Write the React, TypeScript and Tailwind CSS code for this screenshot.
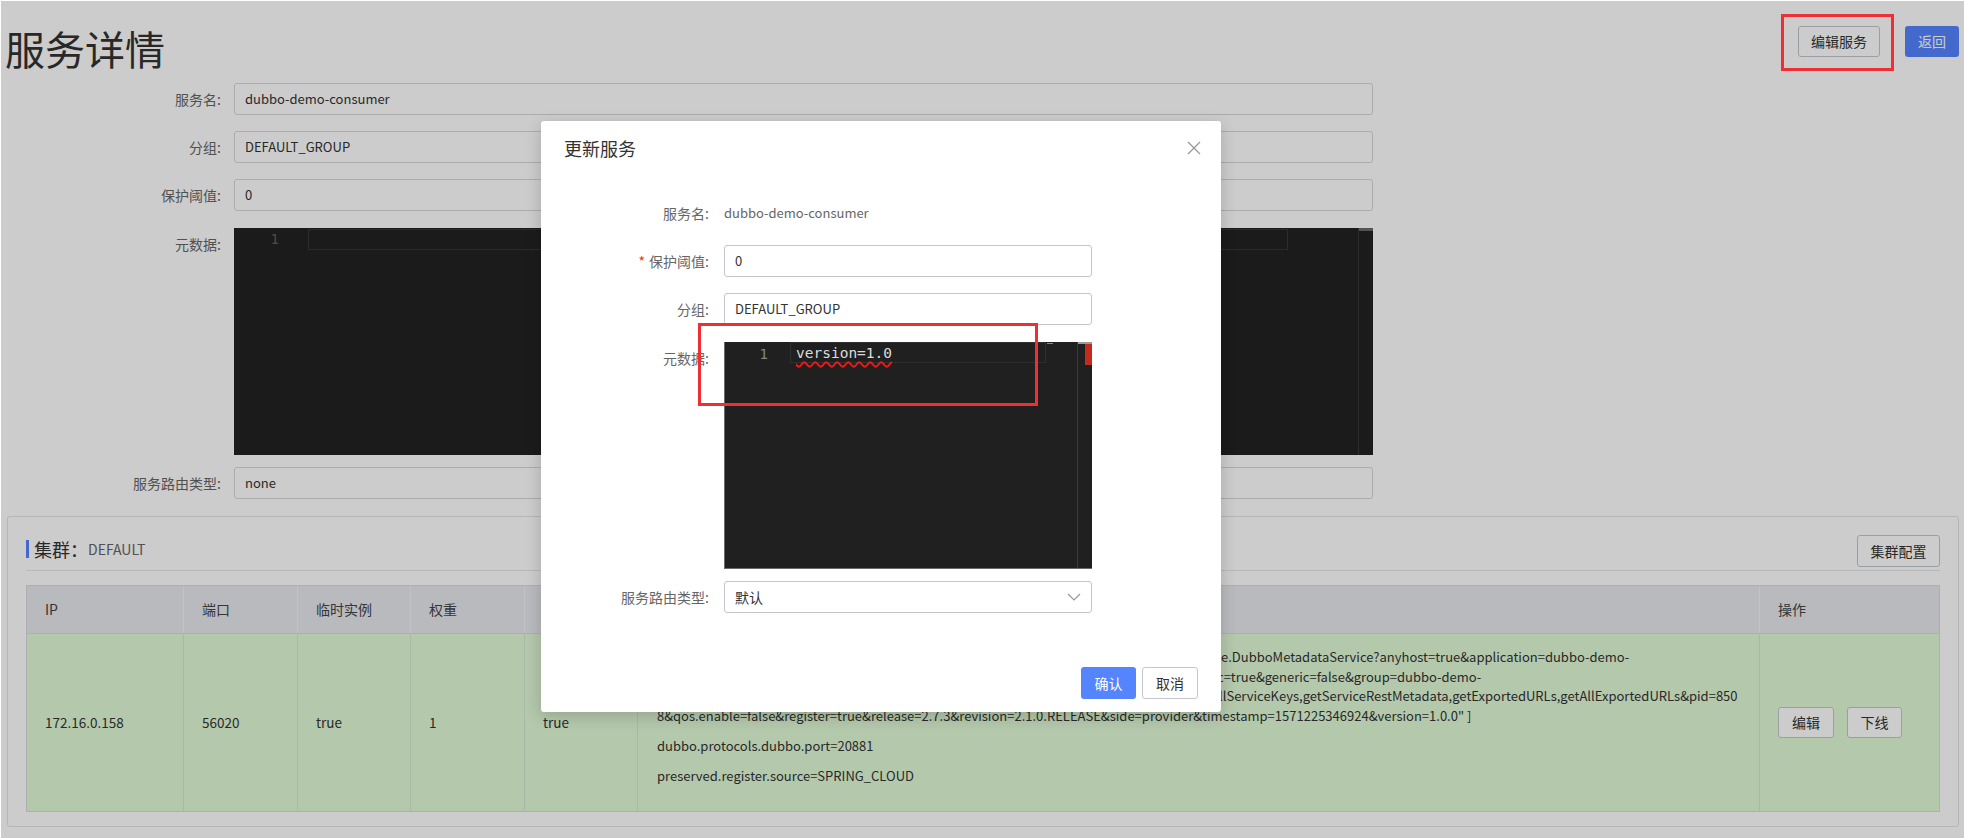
import React from "react";

const headers = ["IP", "端口", "临时实例", "权重", "健康状态", "元数据", "操作"];

function PageRow({ label, children, className }: { label: string; children: React.ReactNode; className?: string }) {
  return (
    <div className={"flex items-start " + (className ?? "")}>
      <div className="h-[32px] w-[216px] text-right leading-[32px] text-[#666]">{label}</div>
      <div className="ml-[13px]">{children}</div>
    </div>
  );
}

function PageInput({ children }: { children: React.ReactNode }) {
  return (
    <div className="flex h-[32px] w-[1139px] items-center rounded-[3px] border border-[#d5d7de] bg-white px-[10px] text-[13px] text-[#333]">
      {children}
    </div>
  );
}

function ModalRow({ label, children, required, className }: { label: string; children: React.ReactNode; required?: boolean; className?: string }) {
  return (
    <div className={"flex items-start " + (className ?? "")}>
      <div className="flex h-[32px] w-[168px] items-center justify-end text-[#666]">
        {required && <span className="mr-[4px] text-[#ff3000]">*</span>}
        {label}
      </div>
      <div className="ml-[15px]">{children}</div>
    </div>
  );
}

export default function App() {
  return (
    <div className="relative h-[838px] w-[1964px] overflow-hidden bg-white font-['Noto_Sans_CJK_SC','Noto_Sans',sans-serif] text-[14px] text-[#333]">
      {/* page */}
      <div className="px-[5px]">
        <div className="flex items-start justify-between pt-[24px]">
          <h1 className="text-[40px] font-normal leading-[48px] text-[#333]">服务详情</h1>
          <div className="mt-[2px] flex items-center gap-[25px]">
            <button className="h-[31px] w-[82px] rounded-[3px] border border-[#c4c6cf] bg-white text-[14px] text-[#333]">编辑服务</button>
            <button className="h-[31px] w-[54px] rounded-[3px] bg-[#5584ff] text-[14px] text-white">返回</button>
          </div>
        </div>

        <div className="mt-[11px] flex flex-col">
          <PageRow label="服务名:">
            <PageInput>dubbo-demo-consumer</PageInput>
          </PageRow>
          <PageRow label="分组:" className="mt-[16px]">
            <PageInput>DEFAULT_GROUP</PageInput>
          </PageRow>
          <PageRow label="保护阈值:" className="mt-[16px]">
            <PageInput>0</PageInput>
          </PageRow>
          <PageRow label="元数据:" className="mt-[17px]">
            <div className="flex h-[227px] w-[1139px] bg-[#222]">
              <div className="w-[74px] pr-[29px] pt-[1px] text-right font-['DejaVu_Sans_Mono',monospace] text-[14px] leading-[20px] text-[#5e5e5e]">1</div>
              <div className="flex-1 pt-[1px]">
                <div className="h-[21px] border border-[#363636]" />
              </div>
              <div className="w-[70px]" />
              <div className="w-[15px] border-l border-[#3a3a3a]">
                <div className="h-[3px] bg-[#6a6a6a]" />
              </div>
            </div>
          </PageRow>
          <PageRow label="服务路由类型:" className="mt-[12px]">
            <PageInput>none</PageInput>
          </PageRow>
        </div>

        {/* cluster panel */}
        <div className="ml-[2px] mt-[17px] rounded-[3px] border border-[#e4e4e4] px-[18px] pb-[14px] pt-[18px]">
          <div className="flex h-[36px] items-start justify-between border-b border-[#e6e6e6]">
            <div className="flex h-[28px] items-center">
              <div className="h-[18px] w-[3px] bg-[#5584ff]" />
              <span className="ml-[5px] text-[18px] text-[#333]">集群：</span>
              <span className="text-[14px] text-[#666]">DEFAULT</span>
            </div>
            <button className="h-[32px] w-[83px] rounded-[3px] border border-[#c4c6cf] bg-white text-[14px] text-[#333]">集群配置</button>
          </div>

          <div className="mt-[14px] border border-[#d9dbe0]">
            <div className="grid h-[48px] grid-cols-[156px_114px_113px_114px_113px_1122px_181px] border-b border-[#d9dbe0] bg-[#e7e9ee]">
              {headers.map((h, i) => (
                <div
                  key={h}
                  className={"flex items-center pl-[18px] text-[#444] " + (i > 0 ? "border-l border-[#f3f4f6]" : "")}
                >
                  {h}
                </div>
              ))}
            </div>
            <div className="grid h-[177px] grid-cols-[156px_114px_113px_114px_113px_1122px_181px] bg-[#e2fbd8] text-[13.5px]">
              <div className="flex items-center pl-[18px]">172.16.0.158</div>
              <div className="flex items-center border-l border-[#d6e6cf] pl-[18px]">56020</div>
              <div className="flex items-center border-l border-[#d6e6cf] pl-[18px]">true</div>
              <div className="flex items-center border-l border-[#d6e6cf] pl-[18px]">1</div>
              <div className="flex items-center border-l border-[#d6e6cf] pl-[18px]">true</div>
              <div className="flex flex-col border-l border-[#d6e6cf] pl-[19px] pt-[13px] text-[13px] leading-[19.6px] text-[#333]">
                <div className="whitespace-nowrap">
                  <span className="inline-block w-[564px] overflow-hidden align-top">dubbo.metadata-service.urls=[ "dubbo://172.16.0.158:20881/com.alibaba.cloud.dubbo.servic</span>e.DubboMetadataService?anyhost=true&amp;application=dubbo-demo-
                </div>
                <div className="whitespace-nowrap">
                  <span className="inline-block w-[560px] overflow-hidden align-top">consumer&amp;bind.ip=172.16.0.158&amp;bind.port=20881&amp;deprecated=false&amp;dubbo=2.0.2&amp;dynami</span>c=true&amp;generic=false&amp;group=dubbo-demo-
                </div>
                <div className="whitespace-nowrap">
                  <span className="inline-block w-[562px] overflow-hidden align-top">consumer&amp;interface=com.alibaba.cloud.dubbo.service.DubboMetadataService&amp;methods=getA</span>llServiceKeys,getServiceRestMetadata,getExportedURLs,getAllExportedURLs&amp;pid=850
                </div>
                <div className="whitespace-nowrap">
                  8&amp;qos.enable=false&amp;register=true&amp;release=2.7.3&amp;revision=2.1.0.RELEASE&amp;side=provider&amp;timestamp=1571225346924&amp;version=1.0.0" ]
                </div>
                <div className="mt-[10.5px]">dubbo.protocols.dubbo.port=20881</div>
                <div className="mt-[10.5px]">preserved.register.source=SPRING_CLOUD</div>
              </div>
              <div className="flex items-center gap-[13px] border-l border-[#d6e6cf] pl-[18px]">
                <button className="h-[31px] w-[56px] rounded-[3px] border border-[#c4c6cf] bg-white text-[14px] text-[#333]">编辑</button>
                <button className="h-[31px] w-[55px] rounded-[3px] border border-[#c4c6cf] bg-white text-[14px] text-[#333]">下线</button>
              </div>
            </div>
          </div>
        </div>
      </div>

      {/* mask */}
      <div className="absolute bottom-0 left-[1px] right-0 top-[1px] bg-black/20" />

      {/* dialog */}
      <div className="absolute left-[541px] top-[121px] flex h-[591px] w-[680px] flex-col rounded-[3px] bg-white shadow-[0_4px_16px_rgba(0,0,0,0.18)]">
        <div className="flex h-[54px] items-center justify-between pl-[23px] pr-[20px]">
          <span className="text-[18px] text-[#333]">更新服务</span>
          <svg width="14" height="14" viewBox="0 0 14 14" fill="none" stroke="#999" strokeWidth="1.3">
            <line x1="1" y1="1" x2="13" y2="13" />
            <line x1="13" y1="1" x2="1" y2="13" />
          </svg>
        </div>
        <div className="flex flex-col pt-[22px]">
          <ModalRow label="服务名:">
            <div className="flex h-[32px] items-center text-[13px] text-[#666]">dubbo-demo-consumer</div>
          </ModalRow>
          <ModalRow label="保护阈值:" required className="mt-[16px]">
            <div className="flex h-[32px] w-[368px] items-center rounded-[3px] border border-[#c4c6cf] px-[10px] text-[13px] text-[#333]">0</div>
          </ModalRow>
          <ModalRow label="分组:" className="mt-[16px]">
            <div className="flex h-[32px] w-[368px] items-center rounded-[3px] border border-[#c4c6cf] px-[10px] text-[13px] text-[#333]">DEFAULT_GROUP</div>
          </ModalRow>
          <ModalRow label="元数据:" className="mt-[17px]">
            <div className="flex h-[227px] w-[368px] border-b border-l border-[#6a6a6a] bg-[#202020]">
              <div className="w-[65px] pr-[22px] pt-[2px] text-right font-['DejaVu_Sans_Mono',monospace] text-[14px] leading-[20px] text-[#858585]">1</div>
              <div className="flex-1">
                <div className="h-[21px] border border-[#2f2f2f] pl-[5px] pt-[1px] font-['DejaVu_Sans_Mono',monospace] text-[14.5px] leading-[19px] text-[#dcdcdc]">
                  <span className="underline decoration-[#f01818] decoration-wavy decoration-[1.5px] underline-offset-[3px]">version=1.0</span>
                </div>
              </div>
              <div className="relative w-[31px]">
                <div className="absolute left-[1px] top-[1px] h-[1px] w-[6px] bg-[#8a8a8a]" />
              </div>
              <div className="relative w-[15px] border-l border-[#3c3c3c]">
                <div className="h-[2px] bg-[#9a9a9a]" />
                <div className="absolute right-0 top-[2px] h-[21px] w-[7px] bg-[#c42b1c]" />
              </div>
            </div>
          </ModalRow>
          <ModalRow label="服务路由类型:" className="mt-[12px]">
            <div className="flex h-[32px] w-[368px] items-center justify-between rounded-[3px] border border-[#c4c6cf] pl-[10px] pr-[10px] text-[#333]">
              <span>默认</span>
              <svg width="14" height="8" viewBox="0 0 14 8" fill="none" stroke="#999" strokeWidth="1.2">
                <polyline points="1,1 7,7 13,1" />
              </svg>
            </div>
          </ModalRow>
        </div>
        <div className="mt-auto flex justify-end gap-[6px] pb-[13px] pr-[23px]">
          <button className="h-[32px] w-[55px] rounded-[3px] bg-[#5584ff] text-[14px] text-white">确认</button>
          <button className="h-[32px] w-[56px] rounded-[3px] border border-[#c4c6cf] bg-white text-[14px] text-[#333]">取消</button>
        </div>
      </div>

      {/* annotations */}
      <div className="absolute left-[1781px] top-[14px] h-[57px] w-[113px] border-[3px] border-[#ee2f35]" />
      <div className="absolute left-[698px] top-[323px] h-[83px] w-[340px] border-[3px] border-[#ee2f35]" />
    </div>
  );
}
